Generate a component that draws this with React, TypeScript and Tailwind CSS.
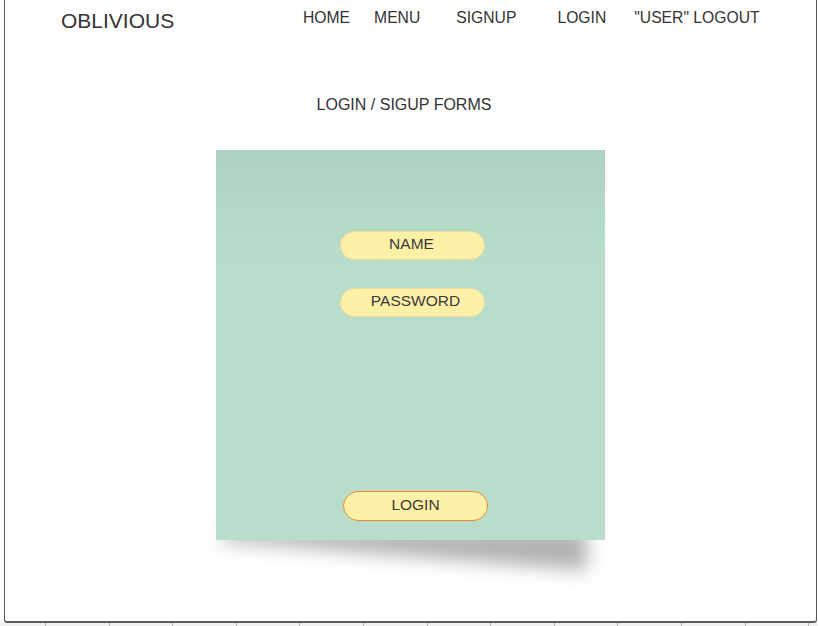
import React from "react";

const navItems = [
  { label: "HOME", ml: "ml-0" },
  { label: "MENU", ml: "ml-[24px]" },
  { label: "SIGNUP", ml: "ml-[36px]" },
  { label: "LOGIN", ml: "ml-[41px]" },
  { label: '"USER" LOGOUT', ml: "ml-[28px]" },
];

const ticks = Array.from({ length: 13 });

const Pill = ({ label, cls }: { label: string; cls: string }) => (
  <div
    className={`w-[145px] h-[29px] pb-[3px] rounded-full bg-[#fff0a8] flex items-center justify-center text-[15.5px] text-[#3a3a3a] ${cls}`}
  >
    {label}
  </div>
);

export default function App() {
  return (
    <div
      className="w-[818px] h-[626px] bg-white overflow-hidden text-[#333]"
      style={{ fontFamily: '"Liberation Sans", Arial, sans-serif' }}
    >
      <div className="ml-[4px] w-[813px] h-[623px] border-x border-b-2 border-[#5c5c5c] rounded-b-[3px]">
        {/* header */}
        <div className="flex h-[44px]">
          <div className="w-[298px] pl-[56px] pt-[9px] text-[21px] leading-[24px]">OBLIVIOUS</div>
          <div className="flex pt-[9px] text-[15.7px] leading-[18px]">
            {navItems.map((n) => (
              <span key={n.label} className={n.ml}>
                {n.label}
              </span>
            ))}
          </div>
        </div>

        <div className="mt-[52px] text-center pr-[13px] text-[16px] leading-[18px]">LOGIN / SIGUP FORMS</div>

        {/* form panel */}
        <div className="relative mt-[36px] mx-auto w-[389px] h-[390px]">
          <div className="absolute left-[6px] right-[18px] top-[380px] h-[52px] blur-[9px]">
            <div className="w-full h-full bg-black/30 [clip-path:polygon(0_0,100%_0,100%_78%,0_22%)]" />
          </div>
          <div className="relative h-full bg-linear-to-b from-[#aed2c2] to-[#b8decb] to-30% pt-[81px] flex flex-col">
            <Pill label="NAME" cls="ml-[124px] border border-[#efdb9f] pr-[2px]" />
            <Pill label="PASSWORD" cls="ml-[124px] mt-[28px] border border-[#efdb9f] pl-[6px]" />
            <Pill
              label="LOGIN"
              cls="ml-[127px] mt-[174px] h-[30px] border border-[#f08a30]"
            />
          </div>
        </div>
      </div>
      <div className="h-[3px] bg-[#f1f1f1] flex pl-[45px] gap-[62.6px]">
        {ticks.map((_, i) => (
          <span key={i} className="w-px h-[3px] bg-[#b5b5b5]" />
        ))}
      </div>
    </div>
  );
}
